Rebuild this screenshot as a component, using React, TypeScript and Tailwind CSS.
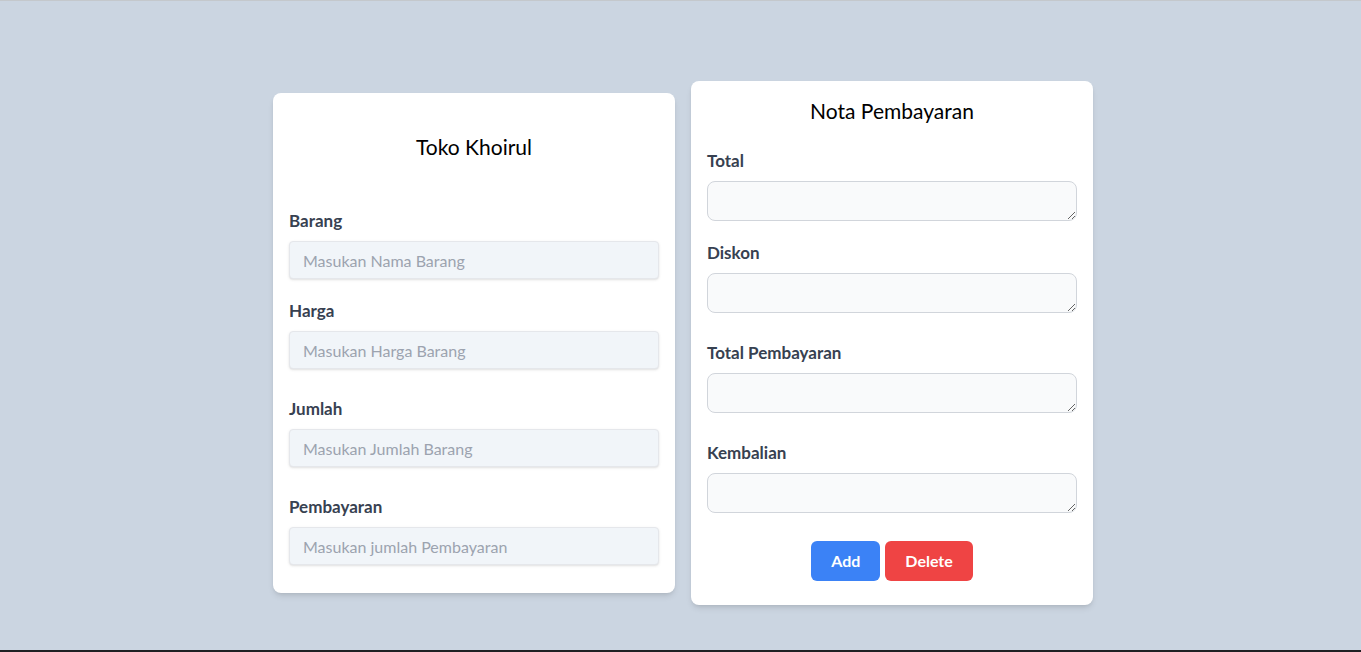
import React from "react";

const font = { fontFamily: 'Lato, "Noto Sans", sans-serif' };

function Field({ label, placeholder, className }: { label: string; placeholder: string; className?: string }) {
  return (
    <div className={className}>
      <label className="block h-6 text-[17px] leading-6 font-bold text-[#374151]">{label}</label>
      <input
        type="text"
        placeholder={placeholder}
        className="mt-2 block h-[38px] w-full rounded border border-[#e5e7eb] bg-[#f1f5f9] px-[13px] text-base text-[#374151] placeholder:text-[#9ca3af] shadow-sm outline-none"
      />
    </div>
  );
}

function Area({ label, className }: { label: string; className?: string }) {
  return (
    <div className={className}>
      <label className="block h-6 text-[17px] leading-6 font-bold text-[#374151]">{label}</label>
      <textarea className="mt-2 block h-10 w-full rounded-lg border border-[#d1d5db] bg-[#f9fafb] outline-none" />
    </div>
  );
}

export default function App() {
  return (
    <div style={font} className="flex h-[652px] flex-col border-t border-[#c4c8cc] bg-[#cbd5e1]">
      <div className="flex flex-1 items-start justify-center gap-4 pt-[80px] pl-[5px]">
        <div className="mt-3 w-[402px] rounded-lg bg-white p-4 pb-7 shadow-md">
          <h1 className="mt-[24px] h-7 text-center text-[21px] leading-7 text-black">Toko Khoirul</h1>
          <Field className="mt-[48px]" label="Barang" placeholder="Masukan Nama Barang" />
          <Field className="mt-5" label="Harga" placeholder="Masukan Harga Barang" />
          <Field className="mt-7" label="Jumlah" placeholder="Masukan Jumlah Barang" />
          <Field className="mt-7" label="Pembayaran" placeholder="Masukan jumlah Pembayaran" />
        </div>
        <div className="w-[402px] rounded-lg bg-white p-4 pb-6 shadow-md">
          <h2 className="h-7 text-center text-[21px] leading-7 text-black">Nota Pembayaran</h2>
          <Area className="mt-[24px]" label="Total" />
          <Area className="mt-5" label="Diskon" />
          <Area className="mt-7" label="Total Pembayaran" />
          <Area className="mt-7" label="Kembalian" />
          <div className="mt-7 flex justify-center gap-[5px]">
            <button className="h-10 rounded-md bg-[#3b82f6] px-5 font-bold text-white">Add</button>
            <button className="h-10 rounded-md bg-[#ef4444] px-5 font-bold text-white">Delete</button>
          </div>
        </div>
      </div>
      <div className="h-[2px] bg-[#1f2023]" />
    </div>
  );
}
